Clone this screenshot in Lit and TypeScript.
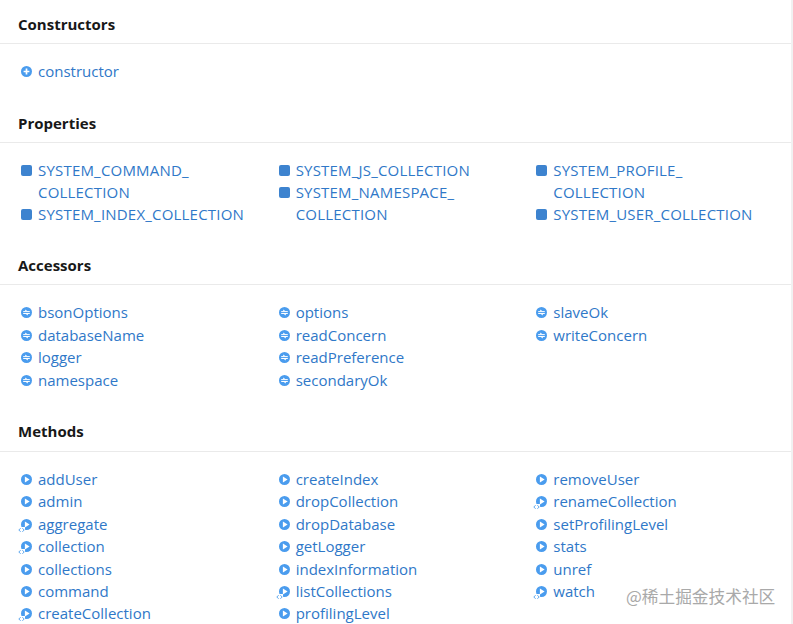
import { LitElement, html, css, svg } from "lit";
import { customElement } from "lit/decorators.js";

type Kind = "ctor" | "prop" | "acc" | "method";
type Item = { t: string; k: Kind; inh?: boolean };

const m = (t: string, inh = false): Item => ({ t, k: "method", inh });
const a = (t: string): Item => ({ t, k: "acc" });
const p = (t: string): Item => ({ t, k: "prop" });

const sections: { title: string; cls: string; cols: Item[][] }[] = [
  { title: "Constructors", cls: "", cols: [[{ t: "constructor", k: "ctor" }], [], []] },
  {
    title: "Properties",
    cls: "tight",
    cols: [
      [p("SYSTEM_COMMAND_ COLLECTION"), p("SYSTEM_INDEX_COLLECTION")],
      [p("SYSTEM_JS_COLLECTION"), p("SYSTEM_NAMESPACE_ COLLECTION")],
      [p("SYSTEM_PROFILE_ COLLECTION"), p("SYSTEM_USER_COLLECTION")],
    ],
  },
  {
    title: "Accessors",
    cls: "accessors",
    cols: [
      [a("bsonOptions"), a("databaseName"), a("logger"), a("namespace")],
      [a("options"), a("readConcern"), a("readPreference"), a("secondaryOk")],
      [a("slaveOk"), a("writeConcern")],
    ],
  },
  {
    title: "Methods",
    cls: "methods",
    cols: [
      [m("addUser"), m("admin"), m("aggregate", true), m("collection", true), m("collections"), m("command"), m("createCollection", true)],
      [m("createIndex"), m("dropCollection"), m("dropDatabase"), m("getLogger"), m("indexInformation"), m("listCollections", true), m("profilingLevel")],
      [m("removeUser"), m("renameCollection", true), m("setProfilingLevel"), m("stats"), m("unref"), m("watch", true)],
    ],
  },
];

function glyph(k: Kind) {
  if (k === "prop") return svg`<rect x="0" y="0" width="11" height="11" rx="2" fill="#3d83cf"></rect>`;
  const base = svg`<circle cx="5.5" cy="5.5" r="5.5" fill="#4a9cee"></circle>`;
  if (k === "ctor")
    return svg`${base}<path d="M2.6 5.5H8.4M5.5 2.6V8.4" stroke="#fff" stroke-width="1.7"></path>`;
  if (k === "acc")
    return svg`${base}<path d="M2.2 4.6H8.8M2.2 6.5H8.8" stroke="#fff" stroke-width="1"></path><path d="M6.2 3.9L4.2 2.6V3.9ZM4.8 7.1L6.8 8.4V7.1Z" fill="#fff"></path>`;
  return svg`${base}<path d="M3.9 2.6L8.6 5.5L3.9 8.4Z" fill="#fff"></path>`;
}

@customElement("app-root")
export class AppRoot extends LitElement {
  static styles = css`
    :host {
      display: block;
      position: relative;
      width: 793px;
      height: 624px;
      overflow: hidden;
      background: #fff;
      font-family: "Open Sans", "Noto Sans", sans-serif;
      box-sizing: border-box;
      border-right: 2px solid #f1f1f1;
    }
    section { padding-bottom: 16.6px; }
    section.tight { padding-bottom: 16.4px; }
    section.accessors { padding-bottom: 16.3px; }
    h2 {
      margin: 0;
      padding: 12px 0 7px 18px;
      font-size: 15px;
      line-height: 24px;
      font-weight: 700;
      color: #181818;
      border-bottom: 1px solid #eaeaea;
    }
    .methods h2 { padding-bottom: 7.4px; }
    .grid {
      display: grid;
      grid-template-columns: repeat(3, 257.67px);
      padding: 16px 0 0 18px;
    }
    .methods .grid { padding-top: 16.3px; }
    .tight .item { line-height: 22px; letter-spacing: 0.2px; }
    .item {
      display: flex;
      font-size: 15px;
      line-height: 22.4px;
      color: #2f78c8;
      padding-left: 3px;
      padding-right: 16px;
    }
    .ic {
      flex: none;
      position: relative;
      width: 11px;
      height: 11px;
      margin: 6px 6px 0 0;
    }
    .ic svg { display: block; width: 11px; height: 11px; }
    .ic svg.inh {
      position: absolute;
      left: -3px;
      top: 8px;
      width: 7px;
      height: 6px;
    }
    .mark {
      position: absolute;
      left: 626px;
      top: 585px;
      font: 16.7px/22px "Noto Sans CJK SC", sans-serif;
      color: #a9a9a9;
      white-space: nowrap;
    }
  `;

  render() {
    return html`
      ${sections.map(
        (s) => html`<section class=${s.cls}>
          <h2>${s.title}</h2>
          <div class="grid">
            ${s.cols.map(
              (c) => html`<div>
                ${c.map(
                  (i) => html`<div class="item">
                    <span class="ic">
                      <svg viewBox="0 0 11 11">${glyph(i.k)}</svg>
                      ${i.inh
                        ? html`<svg class="inh" viewBox="0 0 7 6"><path d="M0 0h7v6h-7z" fill="#fff"></path><path d="M2.6 1.2L0.8 3L2.6 4.8M4.4 1.2L6.2 3L4.4 4.8" fill="none" stroke="#5ba6ee" stroke-width="1"></path></svg>`
                        : ""}
                    </span>
                    <span>${i.t}</span>
                  </div>`
                )}
              </div>`
            )}
          </div>
        </section>`
      )}
      <div class="mark">@稀土掘金技术社区</div>
    `;
  }
}
